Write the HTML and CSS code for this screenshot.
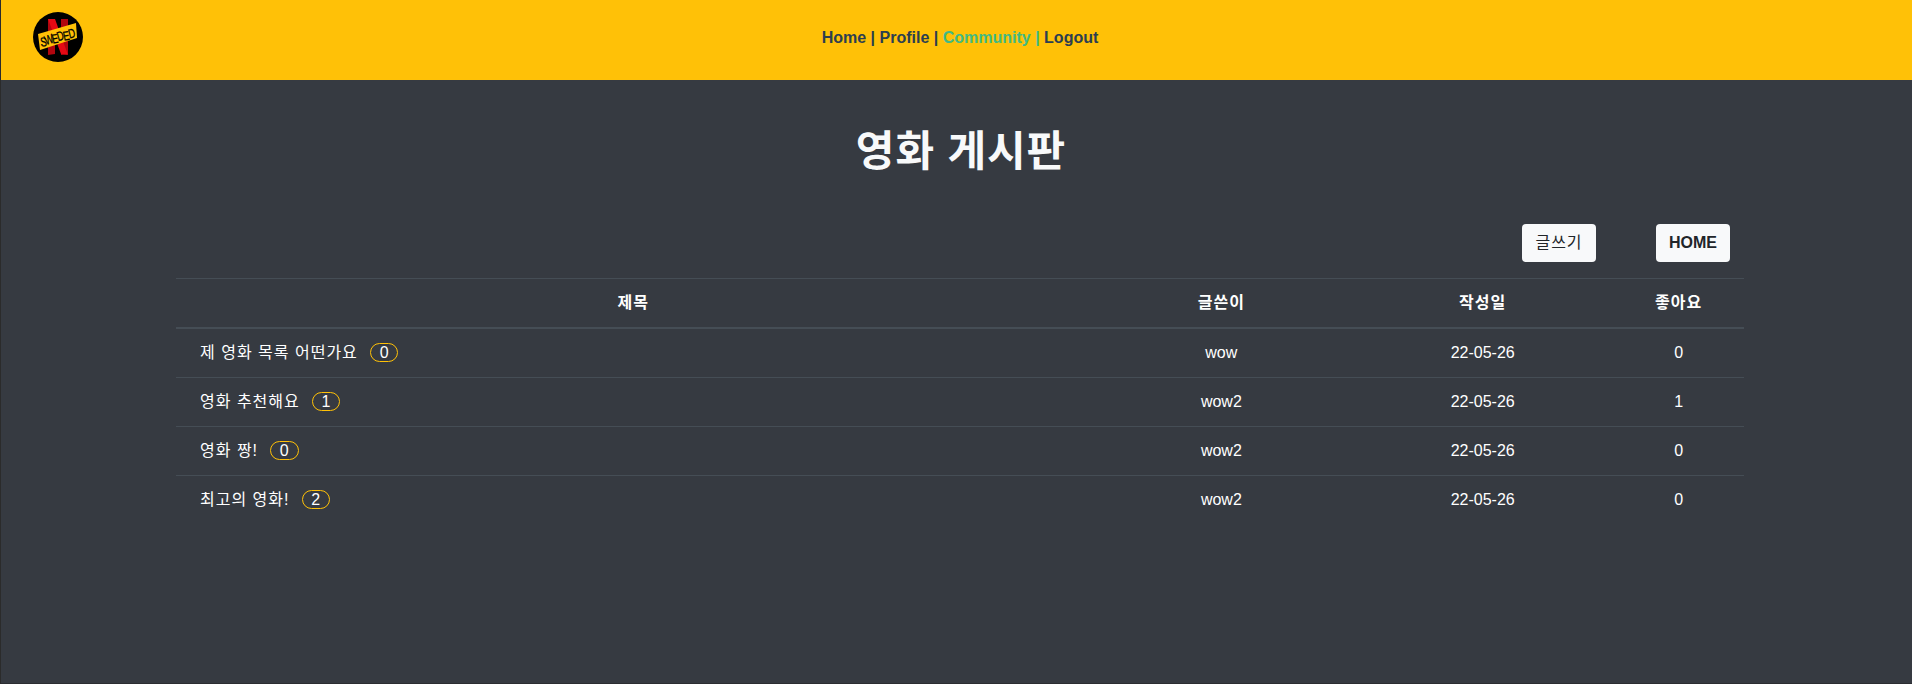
FILE: index.html
```html
<!DOCTYPE html>
<html lang="ko">
<head>
<meta charset="utf-8">
<title>영화 게시판</title>
<link rel="stylesheet" href="styles.css">
</head>
<body>
<header class="navbar">
  <svg class="logo" viewBox="0 0 50 50" width="50" height="50" role="img" aria-label="Sweded">
    <circle cx="25" cy="25" r="25" fill="#000"/>
    <path d="M15 7h7v35l-7 1z" fill="#b1060f"/>
    <path d="M28 7h7v35l-7 1z" fill="#b1060f"/>
    <path d="M15 7h7l13 36-7-1z" fill="#e50914"/>
    <path d="M5 22L43 11l1 15L7 38z" fill="#ffc107"/>
    <text class="logo-text" transform="translate(8 34.5) rotate(-14) scale(.72 1)" x="0 7 17 25 33 41" y="0 0 0 -1 0 -1" rotate="8 -4 4 -3 3 0">SWEDED</text>
  </svg>
  <nav class="nav"><a>Home</a> | <a>Profile</a> | <a class="active">Community |</a> <a>Logout</a></nav>
</header>
<main class="board">
  <h1 class="title">영화 게시판</h1>
  <div class="actions">
    <button class="btn btn-ko ko">글쓰기</button>
    <button class="btn btn-home">HOME</button>
  </div>
  <div class="table">
    <div class="row head"><div class="ko">제목</div><div class="ko">글쓴이</div><div class="ko">작성일</div><div class="ko">좋아요</div></div>
    <div class="row"><div class="subject"><span class="ko">제 영화 목록 어떤가요</span><span class="badge">0</span></div><div>wow</div><div>22-05-26</div><div>0</div></div>
    <div class="row"><div class="subject"><span class="ko">영화 추천해요</span><span class="badge">1</span></div><div>wow2</div><div>22-05-26</div><div>1</div></div>
    <div class="row"><div class="subject"><span class="ko">영화 짱!</span><span class="badge">0</span></div><div>wow2</div><div>22-05-26</div><div>0</div></div>
    <div class="row"><div class="subject"><span class="ko">최고의 영화!</span><span class="badge">2</span></div><div>wow2</div><div>22-05-26</div><div>0</div></div>
  </div>
</main>
</body>
</html>
```
FILE: styles.css
```css
* { box-sizing: border-box; }
body {
  margin: 0;
  height: 684px;
  overflow: hidden;
  border-left: 1px solid #2b2b2b;
  border-bottom: 1px solid #2b2d31;
  background: #363a41;
  color: #fff;
  font: 16px/24px "Liberation Sans", "Noto Sans CJK KR", sans-serif;
}
.navbar {
  display: grid;
  grid-template-columns: 1fr auto 1fr;
  height: 80px;
  padding: 12px 25px 0 32px;
  background: #ffc107;
  color: #2c3e50;
}
.logo { overflow: visible; }
.logo-text { font: 13px/1 "Liberation Sans", sans-serif; fill: #000; stroke: #000; stroke-width: 0.3px; }
.nav { padding-top: 14px; font-weight: bold; }
.nav .active { color: #42b983; }
.board { padding: 0 168px 0 175px; }
.ko { letter-spacing: 1px; }
.title {
  margin: 40px 0 0;
  height: 60px;
  padding-left: 2px;
  font-size: 42px;
  letter-spacing: 0.9px;
  line-height: 64px;
  color: #f8f9fa;
  text-align: center;
}
.actions {
  display: flex;
  justify-content: flex-end;
  gap: 60px;
  margin-top: 44px;
  padding-right: 14px;
}
.btn {
  width: 74px;
  height: 38px;
  padding: 0;
  border: 0;
  border-radius: 4px;
  background: #f8f9fa;
  color: #212529;
  font: inherit;
}
.btn-ko { letter-spacing: 1px; }
.btn-home { font-weight: bold; }
.table { margin-top: 16px; }
.row {
  display: grid;
  grid-template-columns: 7fr 2fr 2fr 1fr;
  height: 49px;
  padding-top: 12px;
  border-bottom: 1px solid #454d55;
  text-align: center;
}
.row:last-child { border-bottom: 0; }
.head {
  height: 51px;
  border-top: 1px solid #454d55;
  border-bottom-width: 2px;
  font-weight: bold;
}
.subject {
  display: flex;
  align-items: center;
  gap: 12px;
  height: 24px;
  padding-left: 24px;
}
.subject .badge {
  width: 28.5px;
  height: 19px;
  margin-bottom: 2px;
  border: 1px solid #ffc107;
  border-radius: 10px;
  line-height: 17px;
}
```
